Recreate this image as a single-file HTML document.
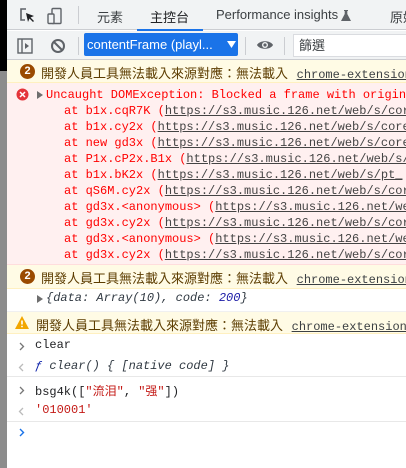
<!DOCTYPE html>
<html><head><meta charset="utf-8"><style>
*{margin:0;padding:0;box-sizing:border-box}
body{width:406px;height:468px;overflow:hidden;background:#fff;position:relative;font-family:"Liberation Sans","Noto Sans CJK TC",sans-serif;font-size:12px;color:#202124}
.a{position:absolute;white-space:nowrap}
.m{font-family:"Liberation Mono","Noto Sans CJK TC",monospace;font-size:12px}
.u{text-decoration:underline}
.red{color:#f00}
.cjk{font-family:"Liberation Sans","Noto Sans CJK TC",sans-serif;font-size:13px;color:#5c3c00}
.ce{margin-left:5px;color:#3c4043}
.badge{position:absolute;width:15px;height:15px;border-radius:50%;background:#9a4a00;color:#fff;font-size:11px;font-weight:bold;text-align:center;line-height:15px}
</style></head><body>
<div class="a" style="left:0;top:0;width:7px;height:468px;background:#8c8c8c"></div>
<div class="a" style="left:0;top:0;width:7px;height:71px;background:#000"></div>
<div class="a" style="left:7px;top:0;width:399px;height:30px;background:#f1f3f4;border-bottom:1px solid #cbcdd1"></div>
<svg class="a" style="left:18px;top:7px" width="18" height="18" viewBox="0 0 18 18"><path d="M8 2H3v11h4" fill="none" stroke="#5f6368" stroke-width="1.6"/><path d="M8 6l2 9 1.5-3.5L15 15l1-1-3.5-3.5L16 9z" fill="#202124"/></svg>
<svg class="a" style="left:46px;top:7px" width="18" height="18" viewBox="0 0 18 18"><rect x="6" y="1.5" width="9" height="15" rx="1" fill="none" stroke="#5f6368" stroke-width="1.4"/><rect x="2" y="7" width="6" height="9.5" rx="1" fill="#f1f3f4" stroke="#5f6368" stroke-width="1.4"/></svg>
<div class="a" style="left:78px;top:6px;width:1px;height:18px;background:#cbcdd1"></div>
<div class="a" style="left:97px;top:7px;font-size:13px;color:#3c4043">元素</div>
<div class="a" style="left:150px;top:7px;font-size:13px;color:#202124">主控台</div>
<div class="a" style="left:137px;top:29px;width:66px;height:2px;background:#1a73e8"></div>
<div class="a" style="left:216px;top:7px;font-size:13px;color:#3c4043">Performance insights</div>
<svg class="a" style="left:341px;top:10px" width="10" height="11" viewBox="0 0 10 11"><path d="M3 0h4v1H6.3v3L10 11H0l3.7-7V1H3z" fill="#5f6368"/></svg>
<div class="a" style="left:390px;top:7px;font-size:13px;color:#3c4043">原始</div>
<div class="a" style="left:7px;top:31px;width:399px;height:29px;background:#f1f3f4;border-bottom:1px solid #cbcdd1"></div>
<svg class="a" style="left:17px;top:38px" width="16" height="16" viewBox="0 0 16 16"><rect x="1" y="1" width="14" height="14" fill="none" stroke="#5f6368" stroke-width="1.4"/><path d="M5 1v14" stroke="#5f6368" stroke-width="1.4"/><path d="M8 5l4 3-4 3z" fill="#5f6368"/></svg>
<svg class="a" style="left:50px;top:38px" width="16" height="16" viewBox="0 0 16 16"><circle cx="8" cy="8" r="6" fill="none" stroke="#5f6368" stroke-width="2"/><path d="M4 4l8 8" stroke="#5f6368" stroke-width="2"/></svg>
<div class="a" style="left:78px;top:37px;width:1px;height:18px;background:#cbcdd1"></div>
<div class="a" style="left:84px;top:33px;width:154px;height:23px;background:#1a73e8;border-radius:2px;color:#fff;font-size:13px;line-height:23px;padding-left:3px">contentFrame (playl...</div>
<svg class="a" style="left:227px;top:41px" width="9" height="7" viewBox="0 0 9 7"><path d="M0 0h9L4.5 7z" fill="#fff"/></svg>
<div class="a" style="left:245px;top:37px;width:1px;height:18px;background:#cbcdd1"></div>
<svg class="a" style="left:256px;top:38px" width="18" height="14" viewBox="0 0 18 14"><path d="M1 7C3.5 2 14.5 2 17 7 14.5 12 3.5 12 1 7z" fill="#5f6368"/><circle cx="9" cy="7" r="3" fill="#f1f3f4"/><circle cx="9" cy="7" r="1.6" fill="#5f6368"/></svg>
<div class="a" style="left:284px;top:37px;width:1px;height:18px;background:#cbcdd1"></div>
<div class="a" style="left:293px;top:34px;width:113px;height:23px;background:#fff;border:1px solid #dadce0;border-right:none;font-size:13px;line-height:21px;padding-left:5px;color:#3c4043">篩選</div>
<div class="a" style="left:7px;top:60px;width:399px;height:23px;background:#fffbe5;border-bottom:1px solid #fff0c0"></div>
<div class="badge" style="left:20px;top:64px">2</div>
<div class="a cjk" style="left:41px;top:63px">開發人員工具無法載入來源對應：無法載入 <span class="m u ce">chrome-extension</span></div>
<div class="a" style="left:7px;top:83px;width:399px;height:182px;background:#fff0f0;border-bottom:1px solid #fdd"></div>
<svg class="a" style="left:16px;top:88px" width="13" height="13" viewBox="0 0 13 13"><circle cx="6.5" cy="6.5" r="6" fill="#e4353b"/><path d="M4 4l5 5M9 4l-5 5" stroke="#fff" stroke-width="1.5"/></svg>
<svg class="a" style="left:37px;top:91px" width="6" height="8" viewBox="0 0 6 8"><path d="M0 0l6 4-6 4z" fill="#6e6e6e"/></svg>
<div class="a m red" style="left:46px;top:87px;line-height:16px">Uncaught DOMException: Blocked a frame with origin<br>
<span style="padding-left:18px">at b1x.cqR7K (<span class="u" style="color:#444">https://s3.music.126.net/web/s/core</span></span><br>
<span style="padding-left:18px">at b1x.cy2x (<span class="u" style="color:#444">https://s3.music.126.net/web/s/core</span></span><br>
<span style="padding-left:18px">at new gd3x (<span class="u" style="color:#444">https://s3.music.126.net/web/s/core</span></span><br>
<span style="padding-left:18px">at P1x.cP2x.B1x (<span class="u" style="color:#444">https://s3.music.126.net/web/s/</span></span><br>
<span style="padding-left:18px">at b1x.bK2x (<span class="u" style="color:#444">https://s3.music.126.net/web/s/pt_</span></span><br>
<span style="padding-left:18px">at qS6M.cy2x (<span class="u" style="color:#444">https://s3.music.126.net/web/s/cor</span></span><br>
<span style="padding-left:18px">at gd3x.&lt;anonymous&gt; (<span class="u" style="color:#444">https://s3.music.126.net/we</span></span><br>
<span style="padding-left:18px">at gd3x.cy2x (<span class="u" style="color:#444">https://s3.music.126.net/web/s/cor</span></span><br>
<span style="padding-left:18px">at gd3x.&lt;anonymous&gt; (<span class="u" style="color:#444">https://s3.music.126.net/we</span></span><br>
<span style="padding-left:18px">at gd3x.cy2x (<span class="u" style="color:#444">https://s3.music.126.net/web/s/cor</span></span></div>
<div class="a" style="left:7px;top:265px;width:399px;height:24px;background:#fffbe5;border-bottom:1px solid #fff0c0"></div>
<div class="badge" style="left:20px;top:269px">2</div>
<div class="a cjk" style="left:41px;top:268px">開發人員工具無法載入來源對應：無法載入 <span class="m u ce">chrome-extension</span></div>
<div class="a" style="left:7px;top:311px;width:399px;height:1px;background:#f0f0f0"></div>
<svg class="a" style="left:37px;top:295px" width="6" height="8" viewBox="0 0 6 8"><path d="M0 0l6 4-6 4z" fill="#6e6e6e"/></svg>
<div class="a m" style="left:46px;top:291px;font-style:italic;color:#303942">{data: Array(10), code: <span style="color:#1a1aa6">200</span>}</div>
<div class="a" style="left:7px;top:312px;width:399px;height:22px;background:#fffbe5;border-bottom:1px solid #fff0c0"></div>
<svg class="a" style="left:15px;top:316px" width="14" height="13" viewBox="0 0 14 13"><path d="M7 0l7 13H0z" fill="#f2a600"/><path d="M7 4.5v4" stroke="#fff" stroke-width="1.6"/><circle cx="7" cy="10.5" r=".9" fill="#fff"/></svg>
<div class="a cjk" style="left:36px;top:315px">開發人員工具無法載入來源對應：無法載入 <span class="m u ce">chrome-extension</span></div>
<svg class="a" style="left:19px;top:342px" width="6" height="9" viewBox="0 0 6 9"><path d="M1 1l3.5 3.5L1 8" fill="none" stroke="#777" stroke-width="1.3"/></svg>
<div class="a m" style="left:35px;top:338px;color:#202124">clear</div>
<svg class="a" style="left:18px;top:363px" width="7" height="9" viewBox="0 0 7 9"><path d="M5 1L1.5 4.5 5 8" fill="none" stroke="#bbb" stroke-width="1.3"/></svg>
<div class="a m" style="left:35px;top:359px;font-style:italic;color:#0d22aa"><span>ƒ</span> <span style="color:#303942">clear() { [native code] }</span></div>
<div class="a" style="left:7px;top:376px;width:399px;height:1px;background:#e8e8e8"></div>
<svg class="a" style="left:19px;top:386px" width="6" height="9" viewBox="0 0 6 9"><path d="M1 1l3.5 3.5L1 8" fill="none" stroke="#777" stroke-width="1.3"/></svg>
<div class="a m" style="left:35px;top:382px;color:#202124">bsg4k([<span style="color:#c41a16">"流泪"</span>, <span style="color:#c41a16">"强"</span>])</div>
<svg class="a" style="left:18px;top:407px" width="7" height="9" viewBox="0 0 7 9"><path d="M5 1L1.5 4.5 5 8" fill="none" stroke="#bbb" stroke-width="1.3"/></svg>
<div class="a m" style="left:35px;top:403px;color:#c41a16">'010001'</div>
<div class="a" style="left:7px;top:421px;width:399px;height:1px;background:#e8e8e8"></div>
<svg class="a" style="left:19px;top:428px" width="6" height="9" viewBox="0 0 6 9"><path d="M1 1l3.5 3.5L1 8" fill="none" stroke="#1a73e8" stroke-width="1.4"/></svg>
</body></html>
